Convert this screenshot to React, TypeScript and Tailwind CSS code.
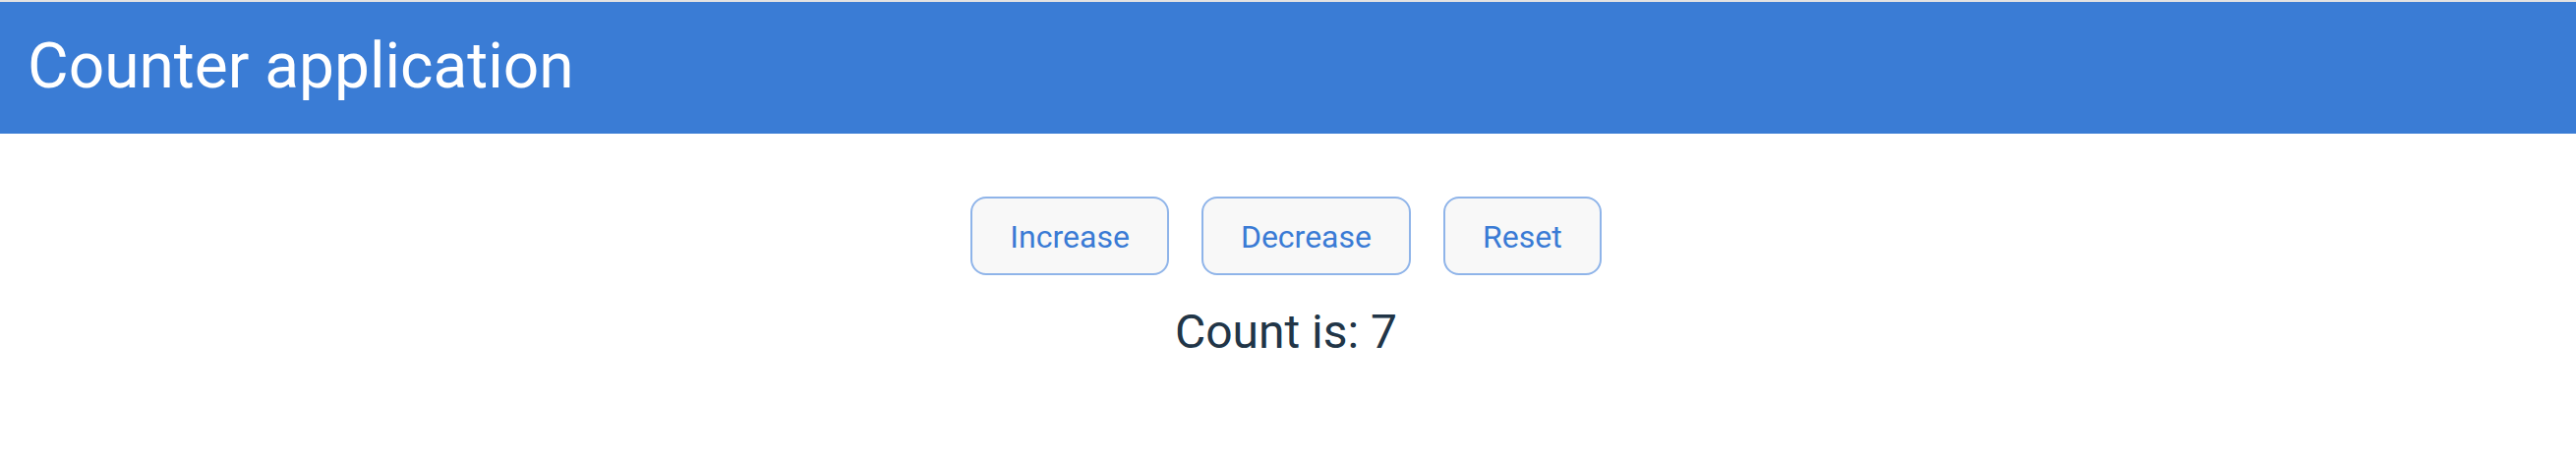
import { useState } from "react";

export default function App() {
  const [count, setCount] = useState(7);

  const btn =
    "h-[80px] px-[38px] pt-[2px] border-2 border-[#8fb4e9] rounded-2xl bg-[#f8f8f8] text-[32px] text-[#3a7bd5] leading-normal hover:border-[#3a7bd5] transition-colors";

  return (
    <div className="min-h-screen bg-white font-['Roboto',sans-serif]">
      <div className="h-[2px] bg-[#e2e2e2]" />
      <header className="h-[134px] bg-[#3a7cd5] flex items-center px-7 pb-[3px]">
        <h1 className="text-[64px] text-white font-normal leading-normal">Counter application</h1>
      </header>

      <main className="flex flex-col items-center pt-16 pr-1">
        <div className="flex gap-[33px]">
          <button className={btn} onClick={() => setCount(count + 1)}>
            Increase
          </button>
          <button className={btn} onClick={() => setCount(count - 1)}>
            Decrease
          </button>
          <button className={btn} onClick={() => setCount(0)}>
            Reset
          </button>
        </div>
        <p className="mt-[30px] text-[48px] leading-[56px] text-[#213547]">Count is: {count}</p>
      </main>
    </div>
  );
}
